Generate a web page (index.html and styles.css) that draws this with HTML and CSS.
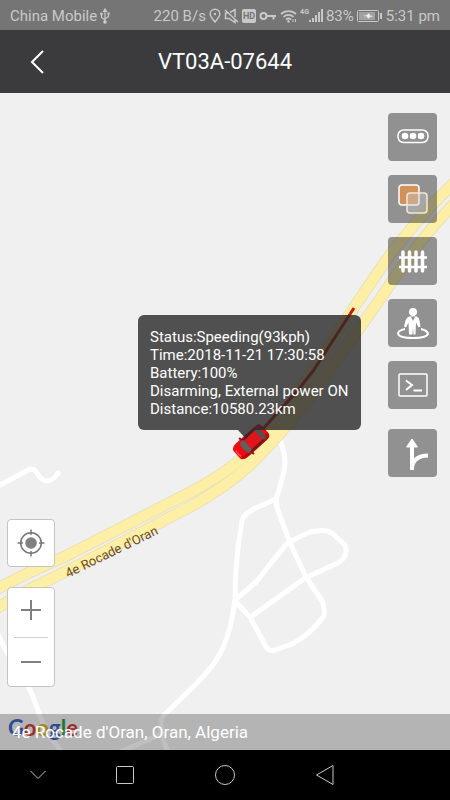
FILE: index.html
```
<!DOCTYPE html>
<html lang="en">
<head>
    <meta charset="UTF-8">
    <meta name="viewport" content="width=device-width, initial-scale=1.0">
    <title>VT03A-07644</title>
    <link rel="stylesheet" href="styles.css">
</head>
<body>

    <div class="status-bar">
        <div class="status-group">
            <span>China Mobile</span>
            <svg width="10" height="16" viewBox="0 0 10 16" fill="none" stroke="currentColor" stroke-width="1.2">
                <path d="M5 2v12M1.500 6v3.500L5 12M8.500 5.500v3L5 11" />
                <path d="M3.500 3.500L5 1l1.500 2.500z" fill="currentColor" />
                <circle cx="5" cy="14" r="1.200" fill="currentColor" />
                <circle cx="1.500" cy="6" r=".8" fill="currentColor" />
                <path d="M8 5h1v1H8z" />
            </svg>
        </div>
        <div class="status-group">
            <span>220 B/s</span>
            <!-- Location -->
            <svg width="12" height="16" viewBox="0 0 12 16" fill="none" stroke="currentColor" stroke-width="1.500">
                <path d="M6 14C3 10.500 1.200 8.500 1.200 6a4.800 4.800 0 0 1 9.600 0C10.800 8.500 9 10.500 6 14z" />
                <circle cx="6" cy="6" r="1.200" fill="currentColor" stroke="none" />
            </svg>
            <!-- Muted -->
            <svg width="15" height="16" viewBox="0 0 15 16" fill="none" stroke="currentColor" stroke-width="1.500">
                <path d="M1 2l13 12M3.500 5H1.500v5.500h3.500l6 4v-3M6 4.500L11 1.500v7.500" />
            </svg>
            <span class="hd">HD</span>
            <!-- VPN key -->
            <svg width="18" height="16" viewBox="0 0 18 16" fill="none" stroke="currentColor" stroke-width="2">
                <circle cx="4.500" cy="8" r="3" />
                <path d="M7.500 8H17M14.500 8v3.500" />
            </svg>
            <!-- Wi-Fi -->
            <svg width="17" height="16" viewBox="0 0 17 16" fill="none" stroke="currentColor" stroke-width="1.800">
                <path d="M1 6a11 11 0 0 1 15 0M3.500 8.800a7.500 7.500 0 0 1 10 0M6 11.500a4 4 0 0 1 5 0" />
                <circle cx="8.500" cy="13.500" r="1.200" fill="currentColor" stroke="none" />
                <path d="M13 11v3M15.500 11v3" stroke-width="1" />
            </svg>
            <span class="signal">
                <span class="signal-type">4G</span>
                <svg width="14" height="16" viewBox="0 0 14 16" fill="currentColor">
                    <path d="M0 12h2v2H0zM3 10h2v4H3zM6 7h2v7H6zM9 4h2v10H9zM12 1h2v13h-2z" />
                </svg>
            </span>
            <span>83%</span>
            <!-- Battery -->
            <svg width="26" height="16" viewBox="0 0 26 16" fill="none" stroke="currentColor">
                <rect x=".5" y="2.500" width="21" height="11" rx="1" />
                <path d="M2 4h16v8H2z" fill="#a0a0a0" stroke="none" />
                <path d="M24 5v6" stroke-width="2" />
                <path d="M6 8l4-1 2-2 1 2.500 4 .5-4 1-2 2-1-2.500z" fill="#eee" stroke="none" />
            </svg>
            <span>5:31 pm</span>
        </div>
    </div>

    <header class="header">
        <button class="back-button" aria-label="Back">
            <svg width="16" height="24" viewBox="0 0 16 24" fill="none" stroke="#fff" stroke-width="2">
                <path d="M13 1L2 12l11 11" />
            </svg>
        </button>
        <h1>VT03A-07644</h1>
    </header>

    <main class="map">
        <svg class="map-canvas" viewBox="0 93 450 657" preserveAspectRatio="xMidYMid slice" fill="none">
            <!-- Minor roads -->
            <g class="minor-roads">
                <path d="M0 485L28 470Q34 467 37 473T46 481Q54 481 58 473" />
                <path d="M-2 634Q1 645 22 675Q31 690 36 705Q44 732 62 752" />
                <path d="M279 437Q285 452 285 462T277 496Q275 503 279 513L290 543L306 577L322 601Q325 607 324 616Q310 635 292 644L275 650Q268 652 265 645L250 617L235 601" />
                <path d="M276 499L256 508Q243 514 242 521Q235 560 235 600Q230 640 215 662Q208 672 193 687L163 716Q157 726 168 752M159 735L120 752" />
                <path d="M235 600L256 582L284 547Q289 541 310 532Q327 528 333 534L345 545Q349 556 338 563L305 578L252 616" />
            </g>
            <!-- Highway, one line per carriageway -->
            <g class="highway-edge">
                <path id="lane-a" d="M-5 590L28 573L66 556L183 496Q225 475 250 451Q285 415 304 384L355 306L385 262Q415 220 455 182" />
                <path id="lane-b" d="M-5 609L30 589L75 567L180 512Q220 492 250 465Q290 425 318 386L366 319L385 292Q420 238 455 203" />
            </g>
            <g class="highway">
                <use href="#lane-a" />
                <use href="#lane-b" />
            </g>
            <text class="road-label" transform="translate(68 578) rotate(-26)">4e Rocade d'Oran</text>
            <!-- Driven track -->
            <path class="track" d="M262 430L298 390L313 371L354 308" />
            <!-- Vehicle -->
            <g transform="translate(251 442) rotate(-42)">
                <path d="M-19-5Q-18-9-12-9H14Q19-9 19-4V4Q19 9 14 9H-12Q-18 9-19 5z" fill="#ee0c12" />
                <path d="M-18 5Q-15 9-8 9H14Q18 9 19 4Q8 7-6 6z" fill="#b00c12" />
                <path d="M-9-7L-4-6V6L-9 7Q-12 0-9-7z" fill="#5d6262" />
                <path d="M-4-6H10V6H-4z" fill="#e0141a" />
                <path d="M10-6l4-1q3 7 0 14l-4-1z" fill="#54504f" />
                <path d="M-6-8H12L10-6H-4zM-6 8H12L10 6H-4z" fill="#6a1a1a" />
                <path d="M-6-8v-3M-6 8v3" stroke="#8c1518" stroke-width="2" />
                <path d="M-17-4q-1 4 0 8" stroke="#ff5c5c" />
            </g>
        </svg>

        <div class="tooltip">
            Status:Speeding(93kph)<br>
            Time:2018-11-21 17:30:58<br>
            Battery:100%<br>
            Disarming, External power ON<br>
            Distance:10580.23km
        </div>

        <div class="tools">
            <div class="tool-group">
                <button class="tool-button" aria-label="More">
                    <svg width="36" height="36" viewBox="0 0 36 36" fill="none" stroke="#fff" stroke-width="1.500">
                        <rect x="3" y="11" width="30" height="12.500" rx="5.500" />
                        <g fill="#fff" stroke="none">
                            <circle cx="10" cy="17" r="3.300" />
                            <circle cx="18" cy="17" r="3.300" />
                            <circle cx="26" cy="17" r="3.300" />
                        </g>
                    </svg>
                </button>
                <button class="tool-button" aria-label="Map layers">
                    <svg width="36" height="36" viewBox="0 0 36 36" stroke="#fff" stroke-width="1.500">
                        <rect x="4" y="4" width="20" height="20" rx="3" fill="#d1935a" />
                        <rect x="12" y="12" width="20" height="20" rx="3" fill="#c8c8c8" fill-opacity=".4" stroke="#f6e6d8" />
                    </svg>
                </button>
                <button class="tool-button" aria-label="Geo-fence">
                    <svg width="36" height="36" viewBox="0 0 36 36" fill="none" stroke="#fff">
                        <path d="M8 9v19M14.500 9v19M21 9v19M27.500 9v19" stroke-width="3.500" stroke-linecap="round" />
                        <path d="M4 14.500h28M4 24h28" stroke-width="2.500" />
                    </svg>
                </button>
                <button class="tool-button" aria-label="Street view">
                    <svg width="36" height="36" viewBox="0 0 36 36" fill="#fff">
                        <circle cx="18" cy="7" r="4" />
                        <path d="M14 11.500h8q2 1 2.500 4l1 6-2 1-2.500-5-.5 12h-2l-.5-7-.5 7h-3.500l-.5-12-2.500 5-2-1 1.500-6q1-3 3.500-4z" />
                        <path d="M16 12l2 4 2-4" fill="#929292" />
                        <path d="M10 24Q3 25.500 3 28.500Q4 33 18 33T33 28.500Q32 25.500 26 24" fill="none" stroke="#fff" stroke-width="2" />
                    </svg>
                </button>
                <button class="tool-button" aria-label="Commands">
                    <svg width="36" height="36" viewBox="0 0 36 36" fill="none" stroke="#fff">
                        <rect x="4" y="7" width="28" height="22" rx="1" stroke-width="1.500" />
                        <path d="M11 13.500l6 4.500-6 5M18.500 23.500h8.500" stroke-width="2" />
                    </svg>
                </button>
            </div>
            <button class="tool-button" aria-label="Route">
                <svg width="36" height="36" viewBox="0 0 36 36" fill="none" stroke="#fff" stroke-width="4">
                    <path d="M17 35V11M17 33Q18 21 33 20.500" />
                    <path d="M17 4l5.500 8h-11z" fill="#fff" stroke-width="1" stroke-linejoin="round" />
                </svg>
            </button>
        </div>

        <div class="map-controls">
            <button class="control-box locate-button" aria-label="My location">
                <svg width="30" height="30" viewBox="0 0 30 30" fill="none" stroke="#777" stroke-width="1.500">
                    <circle cx="15" cy="15" r="10.300" />
                    <circle cx="15" cy="15" r="5.800" fill="#808080" stroke="none" />
                    <path d="M15 1.500V7M15 23v5.500M1.500 15H7M23 15h5.500" />
                </svg>
            </button>
            <div class="control-box zoom-box">
                <button class="zoom-button" aria-label="Zoom in">
                    <svg width="22" height="22" viewBox="0 0 22 22" stroke="#808080" stroke-width="2">
                        <path d="M11 1v20M1 11h20" />
                    </svg>
                </button>
                <button class="zoom-button" aria-label="Zoom out">
                    <svg width="22" height="22" viewBox="0 0 22 22" stroke="#808080" stroke-width="2">
                        <path d="M1 11h20" />
                    </svg>
                </button>
            </div>
        </div>

        <div class="map-logo"><span class="blue">G</span><span class="red">o</span><span class="yellow">o</span><span class="blue">g</span><span class="green">l</span><span class="red">e</span></div>
        <div class="address-bar">4e Rocade d'Oran, Oran, Algeria</div>
    </main>

    <nav class="nav-bar">
        <button aria-label="Hide">
            <svg width="22" height="22" viewBox="0 0 22 22"><path d="M3.500 7l7.500 7.500L18.500 7" /></svg>
        </button>
        <button aria-label="Recent apps">
            <svg width="22" height="22" viewBox="0 0 22 22"><rect x="2.500" y="2.500" width="17" height="17" rx="1" /></svg>
        </button>
        <button aria-label="Home">
            <svg width="22" height="22" viewBox="0 0 22 22"><circle cx="11" cy="11" r="9.500" /></svg>
        </button>
        <button aria-label="Back">
            <svg width="22" height="22" viewBox="0 0 22 22"><path d="M19 1.500v19L2.500 11z" stroke-linejoin="round" /></svg>
        </button>
        <span></span>
    </nav>

</body>
</html>
```
FILE: styles.css
```
/* Global Styles */
* {
    box-sizing: border-box;
}

body {
    font-family: Roboto, Arial, sans-serif;
    margin: 0;
    display: flex;
    flex-direction: column;
    height: 100vh;
    background-color: #000;
    overflow: hidden;
}

button {
    border: none;
    padding: 0;
    background: none;
    display: flex;
    justify-content: center;
    align-items: center;
    cursor: pointer;
}

svg {
    flex-shrink: 0;
}

/* Phone status bar */
.status-bar {
    display: flex;
    justify-content: space-between;
    align-items: center;
    height: 30px;
    padding: 2px 10px 0;
    background-color: #757575;
    color: #c9c9c9;
    font-size: 15px;
    white-space: nowrap;
}

.status-group {
    display: flex;
    align-items: center;
    gap: 3px;
}

.hd {
    padding: 0 1px;
    border-radius: 2px;
    background-color: #c9c9c9;
    color: #757575;
    font-size: 9px;
    font-weight: bold;
    line-height: 14px;
}

.signal {
    display: flex;
    align-items: flex-start;
}

.signal-type {
    font-size: 7px;
    font-weight: bold;
    line-height: 8px;
}

/* Header */
.header {
    display: grid;
    grid-template-columns: 76px 1fr 76px;
    align-items: center;
    height: 63px;
    background-color: #3b3b3d;
    color: #fff;
}

.header h1 {
    margin: 0;
    font-size: 22px;
    font-weight: normal;
    text-align: center;
}

.back-button {
    height: 100%;
}

/* Map */
.map {
    position: relative;
    flex: 1;
    min-height: 0;
    background-color: #f0f0f0;
    overflow: hidden;
}

.map-canvas {
    display: block;
    width: 100%;
    height: 100%;
}

.minor-roads {
    stroke: #fff;
    stroke-width: 5;
    stroke-linejoin: round;
    stroke-linecap: round;
}

/* The lanes get their edge colour from a wider copy below them */
.highway-edge {
    stroke: #ebe0b4;
    stroke-width: 12;
}

.highway {
    stroke: #fdf0a6;
    stroke-width: 10;
}

.road-label {
    fill: #6e4b2a;
    font-size: 13px;
}

.track {
    stroke: #c8141a;
    stroke-width: 3;
}

.tooltip {
    position: absolute;
    left: 138px;
    top: 222px;
    padding: 13px 13px 12px 12px;
    border-radius: 6px;
    background-color: rgba(40, 40, 40, 0.8);
    color: #fff;
    font-size: 15px;
    line-height: 18px;
    white-space: nowrap;
}

.tooltip::after {
    content: "";
    position: absolute;
    left: 100px;
    top: 100%;
    border-top: 9px solid rgba(40, 40, 40, 0.8);
    border-left: 8px solid transparent;
    border-right: 8px solid transparent;
}

/* Map tools */
.tools {
    position: absolute;
    top: 20px;
    right: 13px;
    display: flex;
    flex-direction: column;
    gap: 20px;
}

.tool-group {
    display: flex;
    flex-direction: column;
    gap: 14px;
}

.tool-button {
    width: 49px;
    height: 48px;
    border-radius: 4px;
    background-color: rgba(50, 50, 50, 0.5);
}

.map-controls {
    position: absolute;
    left: 7px;
    bottom: 63px;
    display: flex;
    flex-direction: column;
    gap: 20px;
}

.control-box {
    width: 48px;
    border: 1px solid #c4c4c4;
    border-radius: 4px;
    background-color: #fff;
}

.locate-button {
    height: 48px;
}

.zoom-button {
    width: 34px;
    height: 49px;
    margin: 0 auto;
    padding-bottom: 6px;
}

.zoom-button + .zoom-button {
    border-top: 1px solid #d0d0d0;
    padding-bottom: 0;
}

/* Address */
.map-logo {
    position: absolute;
    left: 8px;
    bottom: 7px;
    font-family: Lato, sans-serif;
    font-size: 22px;
    font-weight: bold;
    line-height: 30px;
}

.blue {
    color: #3f66c4;
}

.red {
    color: #cf3c3c;
}

.yellow {
    color: #e3b022;
}

.green {
    color: #2f9a48;
}

.address-bar {
    position: absolute;
    left: 0;
    right: 0;
    bottom: 0;
    padding: 0 12px;
    background-color: rgba(0, 0, 0, 0.25);
    color: #fff;
    font-size: 17px;
    line-height: 36px;
}

/* Phone navigation bar */
.nav-bar {
    display: grid;
    grid-template-columns: 75px 1fr 1fr 1fr 75px;
    height: 50px;
    background-color: #000;
}

.nav-bar svg {
    fill: none;
    stroke: #c8c8c8;
    stroke-width: 1;
}
```
